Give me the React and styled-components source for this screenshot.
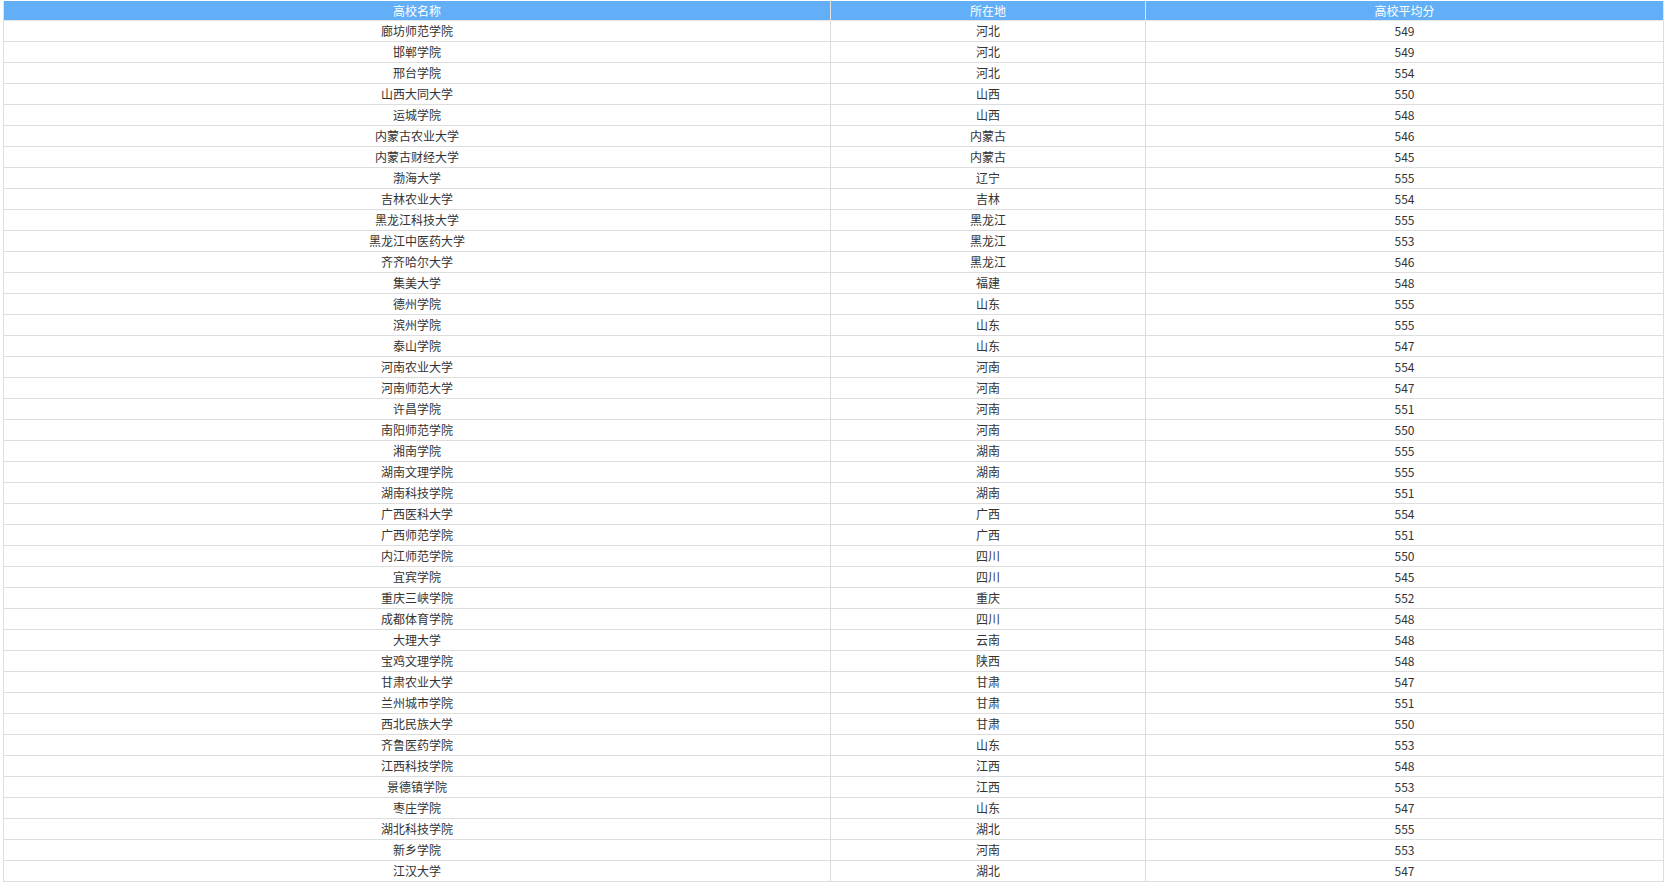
import styled, { createGlobalStyle } from "styled-components";

const Global = createGlobalStyle`
  body {
    margin: 0;
    padding: 1px 5px 0 3px;
    background: #fff;
    font-family: "Noto Sans CJK SC", "Noto Sans", sans-serif;
  }
`;

const rows = [
  ["廊坊师范学院", "河北", 549], ["邯郸学院", "河北", 549], ["邢台学院", "河北", 554],
  ["山西大同大学", "山西", 550], ["运城学院", "山西", 548], ["内蒙古农业大学", "内蒙古", 546],
  ["内蒙古财经大学", "内蒙古", 545], ["渤海大学", "辽宁", 555], ["吉林农业大学", "吉林", 554],
  ["黑龙江科技大学", "黑龙江", 555], ["黑龙江中医药大学", "黑龙江", 553], ["齐齐哈尔大学", "黑龙江", 546],
  ["集美大学", "福建", 548], ["德州学院", "山东", 555], ["滨州学院", "山东", 555],
  ["泰山学院", "山东", 547], ["河南农业大学", "河南", 554], ["河南师范大学", "河南", 547],
  ["许昌学院", "河南", 551], ["南阳师范学院", "河南", 550], ["湘南学院", "湖南", 555],
  ["湖南文理学院", "湖南", 555], ["湖南科技学院", "湖南", 551], ["广西医科大学", "广西", 554],
  ["广西师范学院", "广西", 551], ["内江师范学院", "四川", 550], ["宜宾学院", "四川", 545],
  ["重庆三峡学院", "重庆", 552], ["成都体育学院", "四川", 548], ["大理大学", "云南", 548],
  ["宝鸡文理学院", "陕西", 548], ["甘肃农业大学", "甘肃", 547], ["兰州城市学院", "甘肃", 551],
  ["西北民族大学", "甘肃", 550], ["齐鲁医药学院", "山东", 553], ["江西科技学院", "江西", 548],
  ["景德镇学院", "江西", 553], ["枣庄学院", "山东", 547], ["湖北科技学院", "湖北", 555],
  ["新乡学院", "河南", 553], ["江汉大学", "湖北", 547],
];

const Table = styled.table`
  width: 1660px;
  border-collapse: collapse;
  table-layout: fixed;
  font-size: 12px;
  color: #333;
`;

const Th = styled.th`
  background: #62aff8;
  color: #fff;
  font-weight: normal;
  height: 19px;
  padding: 0;
  text-align: center;
  border: 1px solid #e3e3e3;
  border-top: none;
  line-height: 18px;
`;

const Td = styled.td`
  height: 20px;
  padding: 0;
  text-align: center;
  border: 1px solid #dddddd;
  line-height: 20px;
`;

export default function App() {
  return (
    <>
      <Global />
      <Table>
        <colgroup>
          <col style={{ width: 827 }} />
          <col style={{ width: 315 }} />
          <col style={{ width: 518 }} />
        </colgroup>
        <thead>
          <tr>
            <Th>高校名称</Th>
            <Th>所在地</Th>
            <Th>高校平均分</Th>
          </tr>
        </thead>
        <tbody>
          {rows.map(([n, p, s]) => (
            <tr key={n}>
              <Td>{n}</Td>
              <Td>{p}</Td>
              <Td>{s}</Td>
            </tr>
          ))}
        </tbody>
      </Table>
    </>
  );
}
